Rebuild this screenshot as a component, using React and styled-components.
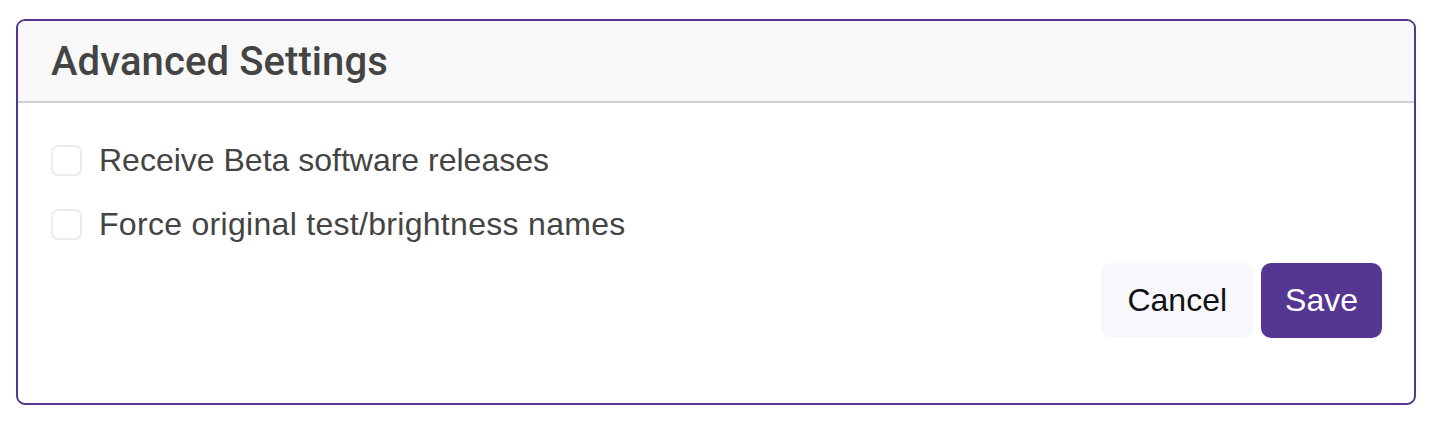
import React from "react";
import styled, { createGlobalStyle } from "styled-components";

const GlobalStyle = createGlobalStyle`
  html, body {
    margin: 0;
    padding: 0;
    background: #ffffff;
  }
  body {
    font-family: "Liberation Sans", Arial, Helvetica, sans-serif;
  }
`;

const Page = styled.div`
  padding: 19px 0 0 16px;
`;

const Card = styled.section`
  box-sizing: border-box;
  width: 1400px;
  border: 2px solid #55368f;
  border-radius: 9px;
  overflow: hidden;
  background: #ffffff;
`;

const Header = styled.header`
  display: flex;
  align-items: center;
  height: 80px;
  padding: 0 33px;
  background: #f8f8f8;
  border-bottom: 2px solid #cfcfcf;
`;

const Title = styled.h2`
  margin: 0;
  font-family: Roboto, "Liberation Sans", Arial, sans-serif;
  font-size: 40px;
  font-weight: 500;
  color: #444444;
  letter-spacing: 0.1px;
`;

const Body = styled.div`
  display: flex;
  flex-direction: column;
  padding: 41px 32px 65px 33px;
`;

const Options = styled.div`
  display: flex;
  flex-direction: column;
  gap: 32px;
`;

const Option = styled.label`
  display: flex;
  align-items: center;
  gap: 17px;
  height: 32px;
  font-size: 32px;
  color: #444444;
  letter-spacing: ${(p) => p.$spacing || "0"};
  cursor: pointer;
`;

const Box = styled.input.attrs({ type: "checkbox" })`
  appearance: none;
  box-sizing: border-box;
  margin: 0;
  width: 31px;
  height: 31px;
  border: 2px solid #ececec;
  border-radius: 7px;
  background: #ffffff;
`;

const Actions = styled.div`
  display: flex;
  justify-content: flex-end;
  gap: 8px;
  margin-top: 23px;
`;

const Button = styled.button`
  height: 75px;
  padding: 0 ${(p) => (p.$primary ? "24px" : "26px")};
  border: none;
  border-radius: 10px;
  font-family: "Liberation Sans", Arial, Helvetica, sans-serif;
  font-size: 32px;
  background: ${(p) => (p.$primary ? "#553692" : "#f8f7fc")};
  color: ${(p) => (p.$primary ? "#ffffff" : "#111111")};
  cursor: pointer;
`;

export default function App() {
  return (
    <>
      <GlobalStyle />
      <Page>
        <Card>
          <Header>
            <Title>Advanced Settings</Title>
          </Header>
          <Body>
            <Options>
              <Option>
                <Box />
                Receive Beta software releases
              </Option>
              <Option $spacing="0.3px">
                <Box />
                Force original test/brightness names
              </Option>
            </Options>
            <Actions>
              <Button>Cancel</Button>
              <Button $primary>Save</Button>
            </Actions>
          </Body>
        </Card>
      </Page>
    </>
  );
}
